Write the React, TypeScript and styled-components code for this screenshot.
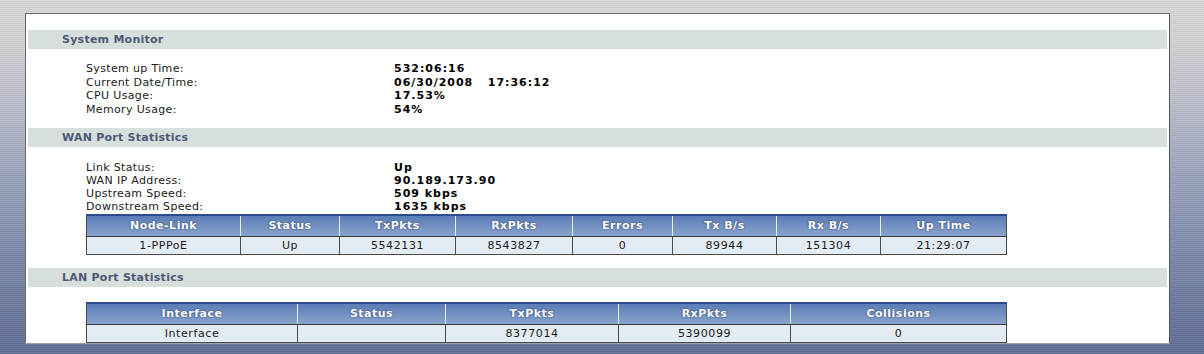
import React from "react";
import styled, { createGlobalStyle } from "styled-components";

const GlobalStyle = createGlobalStyle`
  html, body { margin: 0; padding: 0; }
  body {
    width: 1204px;
    height: 354px;
    overflow: hidden;
    font-family: "DejaVu Sans", Verdana, sans-serif;
    font-size: 11px;
    color: #111;
    background:
      repeating-linear-gradient(to bottom, rgba(255,255,255,0.10) 0px, rgba(255,255,255,0.10) 1px, rgba(0,0,0,0.06) 1px, rgba(0,0,0,0.06) 2px),
      linear-gradient(to bottom, #d9d9d9 0px, #d4d4d6 40px, #b8bccb 110px, #98a2bc 180px, #7c89ab 250px, #66739a 320px, #5f6c94 354px);
  }
`;

const Page = styled.div`
  padding: 13px 0 0 25px;
`;

const Panel = styled.div`
  width: 1139px;
  height: 313px;
  background: #ffffff;
  border-top: 1px solid #6a6a6a;
  border-left: 1px solid #6a6a6a;
  border-right: 1px solid #5a5a5a;
  box-shadow: 0 1px 0 #9aa0b0;
  padding: 16px 2px 0 2px;
`;

const SectionBar = styled.div<{ $bottom?: number }>`
  height: 19px;
  line-height: 19px;
  background: #d6dfdb;
  padding-left: 34px;
  font-weight: bold;
  color: #4e5877;
  font-size: 11px;
  letter-spacing: 0.25px;
`;

const InfoList = styled.div<{ $top: number; $line: number; $bottom: number }>`
  margin: ${(p) => p.$top}px 0 ${(p) => p.$bottom}px 58px;
  display: grid;
  grid-template-columns: 308px auto;
  grid-auto-rows: ${(p) => p.$line}px;
  line-height: ${(p) => p.$line}px;
`;

const Label = styled.div`
  color: #1a1a1a;
  letter-spacing: 0.35px;
`;

const Value = styled.div`
  font-weight: bold;
  color: #000;
  white-space: pre;
  letter-spacing: 1px;
`;

const TableWrap = styled.div<{ $bottom: number }>`
  margin: 0 0 ${(p) => p.$bottom}px 58px;
`;

const Table = styled.table`
  width: 920px;
  border-collapse: collapse;
  table-layout: fixed;
  border: 1px solid #4a4a4a;
  border-top: 2px solid #2c4c8e;
`;

const Th = styled.th`
  height: 20px;
  padding: 0;
  font-weight: bold;
  color: #ffffff;
  letter-spacing: 0.5px;
  text-shadow: 0 0 2px #3b4d78, 0 0 1px #3b4d78;
  background: linear-gradient(to bottom, #5a7bb6 0%, #7290c2 50%, #8aa3cc 100%);
  border-right: 1px solid #e8ecf4;
  border-bottom: 1px solid #3c3c3c;
  text-align: center;
  &:last-child { border-right: none; }
`;

const Td = styled.td`
  height: 17px;
  padding: 0;
  text-align: center;
  color: #1a1a1a;
  letter-spacing: 0.6px;
  background: #e3ebf3;
  border-right: 1px solid #4a4a4a;
  &:last-child { border-right: none; }
`;

const Spacer = styled.div<{ $h: number }>`
  height: ${(p) => p.$h}px;
`;

type Col = { head: string; width: number };

const wanCols: Col[] = [
  { head: "Node-Link", width: 154 },
  { head: "Status", width: 99 },
  { head: "TxPkts", width: 116 },
  { head: "RxPkts", width: 117 },
  { head: "Errors", width: 100 },
  { head: "Tx B/s", width: 104 },
  { head: "Rx B/s", width: 104 },
  { head: "Up Time", width: 126 },
];
const wanRow = ["1-PPPoE", "Up", "5542131", "8543827", "0", "89944", "151304", "21:29:07"];

const lanCols: Col[] = [
  { head: "Interface", width: 211 },
  { head: "Status", width: 148 },
  { head: "TxPkts", width: 173 },
  { head: "RxPkts", width: 172 },
  { head: "Collisions", width: 216 },
];
const lanRow = ["Interface", "", "8377014", "5390099", "0"];

function StatTable({ cols, row }: { cols: Col[]; row: string[] }) {
  return (
    <Table>
      <colgroup>
        {cols.map((c) => (
          <col key={c.head} style={{ width: c.width }} />
        ))}
      </colgroup>
      <thead>
        <tr>
          {cols.map((c) => (
            <Th key={c.head}>{c.head}</Th>
          ))}
        </tr>
      </thead>
      <tbody>
        <tr>
          {row.map((v, i) => (
            <Td key={i}>{v}</Td>
          ))}
        </tr>
      </tbody>
    </Table>
  );
}

export default function App() {
  return (
    <>
      <GlobalStyle />
      <Page>
        <Panel>
          <SectionBar>System Monitor</SectionBar>
          <InfoList $top={13} $line={13.7} $bottom={11}>
            <Label>System up Time:</Label>
            <Value>532:06:16</Value>
            <Label>Current Date/Time:</Label>
            <Value>{"06/30/2008   17:36:12"}</Value>
            <Label>CPU Usage:</Label>
            <Value>17.53%</Value>
            <Label>Memory Usage:</Label>
            <Value>54%</Value>
          </InfoList>
          <SectionBar>WAN Port Statistics</SectionBar>
          <InfoList $top={14} $line={13} $bottom={1}>
            <Label>Link Status:</Label>
            <Value>Up</Value>
            <Label>WAN IP Address:</Label>
            <Value>90.189.173.90</Value>
            <Label>Upstream Speed:</Label>
            <Value>509 kbps</Value>
            <Label>Downstream Speed:</Label>
            <Value>1635 kbps</Value>
          </InfoList>
          <TableWrap $bottom={13}>
            <StatTable cols={wanCols} row={wanRow} />
          </TableWrap>
          <SectionBar>LAN Port Statistics</SectionBar>
          <Spacer $h={15} />
          <TableWrap $bottom={0}>
            <StatTable cols={lanCols} row={lanRow} />
          </TableWrap>
        </Panel>
      </Page>
    </>
  );
}
